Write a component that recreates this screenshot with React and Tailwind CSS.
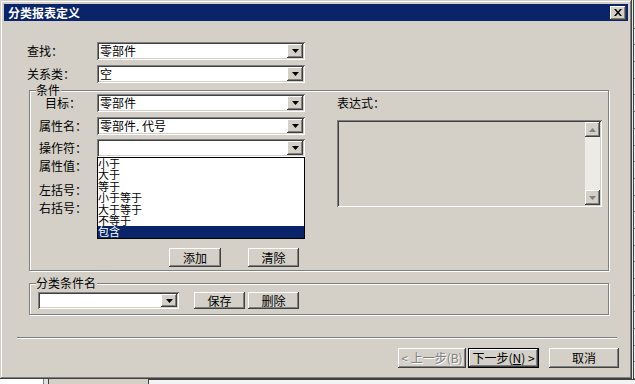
import React from 'react'

const sunken =
  'shadow-[inset_1px_1px_0_#808080,inset_-1px_-1px_0_#fff,inset_2px_2px_0_#404040,inset_-2px_-2px_0_#d4d0c8]'
const raised =
  'shadow-[inset_-1px_-1px_0_#404040,inset_1px_1px_0_#fff,inset_-2px_-2px_0_#808080,inset_2px_2px_0_#d4d0c8]'

function Arrow({ up = false, disabled = false }) {
  const fill = disabled ? '#808080' : '#000'
  return (
    <svg width="7" height="4" viewBox="0 0 7 4" className="block">
      {up ? <path d="M0 4h7L3.5 0z" fill={fill} /> : <path d="M0 0h7L3.5 4z" fill={fill} />}
    </svg>
  )
}

function DropButton() {
  return (
    <div className={`w-[16px] h-full bg-[#d4d0c8] flex items-center justify-center ${raised}`}>
      <Arrow />
    </div>
  )
}

function Combo({ value, className = 'w-[208px] h-[18px]' }) {
  return (
    <div className={`bg-white p-[2px] flex ${sunken} ${className}`}>
      <div className="flex-1 pl-[1px] flex items-center leading-[14px] whitespace-nowrap">{value}</div>
      <DropButton />
    </div>
  )
}

function Button({ children, className = '', disabled = false, isDefault = false }) {
  const inner = (
    <div
      className={`h-full w-full bg-[#d4d0c8] flex items-center justify-center leading-[14px] whitespace-nowrap ${raised} ${
        disabled ? 'text-[#808080] [text-shadow:1px_1px_0_#fff]' : ''
      }`}
    >
      {children}
    </div>
  )
  if (isDefault) {
    return <div className={`border border-black ${className}`}>{inner}</div>
  }
  return <div className={className}>{inner}</div>
}

function Group({ label, className = '', children }) {
  return (
    <div className={`relative border border-[#808080] shadow-[1px_1px_0_#fff,inset_1px_1px_0_#fff] ${className}`}>
      <span className="absolute -top-[7px] left-[6px] bg-[#d4d0c8] pr-[1px] leading-[12px]">{label}</span>
      {children}
    </div>
  )
}

function Row({ label, labelClass = 'w-[58px]', children, className = '' }) {
  return (
    <div className={`flex items-center h-[18px] ${className}`}>
      <div className={`leading-[14px] whitespace-nowrap ${labelClass}`}>{label}</div>
      {children}
    </div>
  )
}

const operators = ['小于', '大于', '等于', '小于等于', '大于等于', '不等于', '包含']

function OperatorList() {
  return (
    <div className="absolute top-[18px] left-0 w-[208px] h-[82px] border border-black bg-white z-10 flex flex-col text-[11px]">
      {operators.map((op, i) => (
        <div
          key={op}
          className={`h-[11.4px] leading-[11.4px] whitespace-nowrap ${
            i === operators.length - 1 ? 'bg-[#0a246a] text-white' : ''
          }`}
        >
          {op}
        </div>
      ))}
    </div>
  )
}

function ExpressionBox() {
  return (
    <div className={`w-[265px] h-[87px] bg-[#d4d0c8] p-[2px] flex ${sunken}`}>
      <div className="flex-1" />
      <div className="w-[15px] h-full flex flex-col bg-[#ecebe6]">
        <div className={`h-[15px] bg-[#d4d0c8] flex items-center justify-center ${raised}`}>
          <Arrow up disabled />
        </div>
        <div className="flex-1" />
        <div className={`h-[15px] bg-[#d4d0c8] flex items-center justify-center ${raised}`}>
          <Arrow disabled />
        </div>
      </div>
    </div>
  )
}

function TitleBar() {
  return (
    <div className="h-[17px] bg-[#0a246a] flex items-center pl-[4px] pr-[2px]">
      <span className="text-white font-bold leading-[14px]">分类报表定义</span>
      <div className={`ml-auto w-[16px] h-[14px] bg-[#d4d0c8] flex items-center justify-center ${raised}`}>
        <svg width="8" height="7" viewBox="0 0 8 7" className="block">
          <path d="M0 0h2l2 2.5L6 0h2L5 3.5 8 7H6L4 4.5 2 7H0l3-3.5z" fill="#000" />
        </svg>
      </div>
    </div>
  )
}

function Dialog() {
  return (
    <div className="w-[632px] h-[379px] bg-[#d4d0c8] p-[4px] flex flex-col shadow-[inset_-1px_-1px_0_#404040,inset_1px_1px_0_#d4d0c8,inset_-2px_-2px_0_#808080,inset_2px_2px_0_#fff]">
      <TitleBar />

      <Row label="查找：" labelClass="w-[70px]" className="mt-[21px] ml-[23px]">
        <Combo value="零部件" />
      </Row>
      <Row label="关系类：" labelClass="w-[70px]" className="mt-[5px] ml-[23px]">
        <Combo value="空" />
      </Row>

      <Group label="条件" className="mt-[7px] ml-[25px] w-[580px] h-[181px] flex flex-col">
        <div className="flex pt-[3px] pl-[9px]">
          <div className="flex flex-col">
            <Row label="目标：" labelClass="w-[58px] pl-[6px]">
              <Combo value="零部件" />
            </Row>
            <Row label="属性名：" className="mt-[5px]">
              <Combo value="零部件. 代号" />
            </Row>
            <Row label="操作符：" className="mt-[4px]">
              <div className="relative">
                <Combo value="" />
                <OperatorList />
              </div>
            </Row>
            <Row label="属性值：" />
            <Row label="左括号：" className="mt-[6px]" />
            <Row label="右括号：" />
          </div>
          <div className="ml-[32px] flex flex-col">
            <div className="h-[18px] flex items-center leading-[14px]">表达式：</div>
            <div className="mt-[8px]">
              <ExpressionBox />
            </div>
          </div>
        </div>
        <div className="flex mt-[31px] ml-[139px]">
          <Button className="w-[52px] h-[19px]">添加</Button>
          <Button className="ml-[27px] w-[51px] h-[19px]">清除</Button>
        </div>
      </Group>

      <Group label="分类条件名" className="mt-[12px] ml-[25px] w-[580px] h-[32px]">
        <div className="flex pt-[8px] pl-[8px]">
          <Combo value="" className="w-[141px] h-[17px]" />
          <Button className="ml-[15px] w-[51px] h-[17px]">保存</Button>
          <Button className="ml-[3px] w-[51px] h-[17px]">删除</Button>
        </div>
      </Group>

      <div className="mt-[22px] ml-[13px] w-[600px] h-[2px] border-t border-b border-t-[#808080] border-b-white" />

      <div className="mt-[9px] flex justify-end pr-[9px]">
        <Button disabled className="w-[68px] h-[20px]">
          &lt; 上一步(B)
        </Button>
        <Button isDefault className="ml-[2px] w-[71px] h-[20px]">
          <span>
            下一步(<u>N</u>) &gt;
          </span>
        </Button>
        <Button className="ml-[10px] w-[70px] h-[20px]">取消</Button>
      </div>
    </div>
  )
}

function RightStrip() {
  const rows = Array.from({ length: 22 })
  return (
    <div className="w-[3px] h-full flex">
      <div className="w-[1px] bg-[#e8e8e8]" />
      <div className="w-[1px] bg-[#404040]" />
      <div className="w-[1px] flex flex-col bg-[#f0f0f0] pt-[12px]">
        {rows.map((_, i) => (
          <div key={i} className="h-[17.5px] border-b border-[#808080]" />
        ))}
      </div>
    </div>
  )
}

function BottomStrip() {
  return (
    <div className="h-[5px] flex">
      <div className="w-[43px] bg-white" />
      <div className="w-[1px] bg-[#808080]" />
      <div className="w-[4px] bg-[#e0e0e0]" />
      <div className="w-[1px] bg-[#404040]" />
      <div className="w-[99px] bg-[#d4d0c8]" />
      <div className="flex-1 border-l border-t border-[#404040] bg-[#f4f4f4]" />
    </div>
  )
}

export default function App() {
  return (
    <div className="w-[635px] h-[384px] overflow-hidden bg-white flex flex-col text-[12px] text-black font-['Noto_Sans_CJK_SC','Noto_Sans',sans-serif]">
      <div className="flex h-[379px]">
        <Dialog />
        <RightStrip />
      </div>
      <BottomStrip />
    </div>
  )
}
